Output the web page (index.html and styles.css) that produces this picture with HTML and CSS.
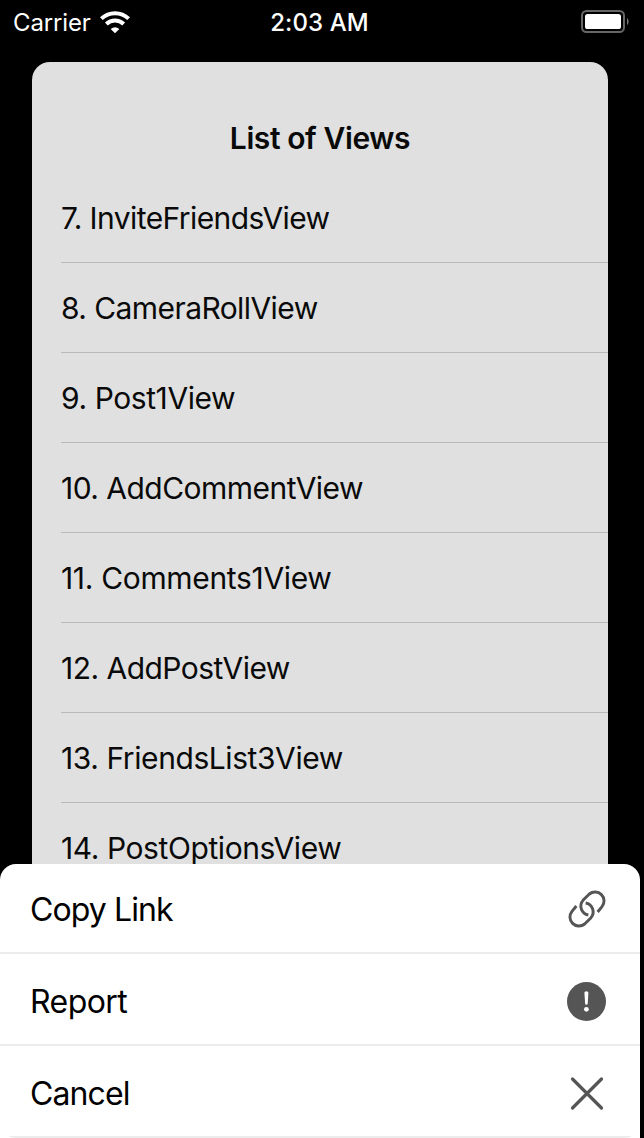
FILE: index.html
```html
<!DOCTYPE html>
<html lang="en">
<head>
<meta charset="utf-8">
<title>List of Views</title>
<link rel="stylesheet" href="styles.css">
</head>
<body>
<div class="phone">
  <header class="status">
    <div class="carrier"><span class="carrier-name">Carrier</span>
      <svg class="wifi" viewBox="0 0 90 68"><g fill="none" stroke="#fff" stroke-width="12"><path d="M4 23C27 1 63 1 86 23"/><path d="M19 39C34 25 56 25 71 39"/></g><path d="M32 54Q45 43 58 54L45 67Z" fill="#fff"/></svg>
    </div>
    <time class="time">2:03 AM</time>
    <svg class="battery" viewBox="0 0 49 24"><rect x="1" y="1" width="42" height="21" rx="4.5" fill="none" stroke="#666" stroke-width="2"/><rect x="4" y="4" width="36" height="15" rx="2.6" fill="#fff"/><path d="M46 8Q47.6 9 47.6 11.5T46 15Z" fill="#777"/></svg>
  </header>
  <main class="card">
    <h1 class="title">List of Views</h1>
    <ul class="views">
      <li class="view"><span class="tight">7. InviteFriendsView</span></li>
      <li class="view"><span class="tight">8. CameraRollView</span></li>
      <li class="view"><span>9. Post1View</span></li>
      <li class="view"><span class="snug">10. AddCommentView</span></li>
      <li class="view"><span class="loose">11. Comments1View</span></li>
      <li class="view"><span class="snug">12. AddPostView</span></li>
      <li class="view"><span>13. FriendsList3View</span></li>
      <li class="view"><span>14. PostOptionsView</span></li>
    </ul>
  </main>
  <section class="sheet">
    <div class="actions">
      <div class="action first"><span>Copy Link</span>
        <svg class="icon" viewBox="69 120 117 117" fill="none" stroke="#555" stroke-width="8.8"><path d="M161 186L174 170A27 27 0 0 0 136 132L117 151A27 27 0 0 0 133 195"/><path d="M97 168L84 184A27 27 0 0 0 122 222L141 203A27 27 0 0 0 125 159"/></svg>
      </div>
      <div class="action"><span class="report">Report</span>
        <svg class="icon" viewBox="0 0 39 39"><circle cx="19.5" cy="19.5" r="19.5" fill="#555"/><path d="M17.4 10.8Q17.4 9.2 19.4 9.2T21.4 10.8L20.7 21.7Q20.6 22.8 19.4 22.8T18.1 21.7Z" fill="#fff"/><circle cx="19.4" cy="27.3" r="2.4" fill="#fff"/></svg>
      </div>
      <div class="action"><span>Cancel</span>
        <svg class="icon" viewBox="0 0 39 39"><path d="M5.5 5L34.5 34M34.5 5L5.5 34" stroke="#555" stroke-width="3.2" stroke-linecap="round"/></svg>
      </div>
    </div>
  </section>
</div>
</body>
</html>
```
FILE: styles.css
```css
* { box-sizing: border-box; }
body { margin: 0; background: #000; font-family: Inter, "Liberation Sans", sans-serif; }
.phone { position: relative; width: 644px; height: 1138px; overflow: hidden; background: #000; }
.status { display: grid; grid-template-columns: 1fr auto 1fr; align-items: center; width: 640px; height: 62px; padding: 0 10px 17px 13px; color: #fff; font-size: 24px; line-height: 30px; }
.carrier { display: flex; align-items: center; gap: 9px; }
.carrier-name { letter-spacing: -0.15px; }
.wifi { width: 30px; height: 22.7px; }
.time { margin-right: 4px; font-weight: 500; letter-spacing: 0.1px; }
.battery { justify-self: end; width: 49px; height: 24px; margin-bottom: 1px; }
.card { width: 576px; height: 900px; margin-left: 32px; padding-top: 56px; border-radius: 18px 18px 0 0; background: #e0e0e0; color: #0a0a0a; }
.title { margin: 0 0 14px; font-size: 30px; line-height: 40px; font-weight: 600; text-align: center; letter-spacing: -0.4px; }
.views { margin: 0; padding: 0 0 0 29px; list-style: none; }
.view { display: flex; align-items: center; height: 90px; border-bottom: 1px solid #b9b9b9; font-size: 30px; white-space: nowrap; letter-spacing: -0.42px; }
.view:first-child { height: 91px; padding-top: 1px; }
.tight { letter-spacing: -0.58px; }
.snug { letter-spacing: -0.53px; }
.loose { letter-spacing: -0.33px; }
.sheet { position: absolute; left: 0; bottom: 0; width: 640px; height: 274px; border-radius: 16px 16px 0 0; background: #fff; overflow: hidden; }
.actions { border-radius: 0 0 16px 16px; overflow: hidden; }
.action { display: flex; align-items: center; justify-content: space-between; height: 92px; padding: 5px 34px 0 30px; border-bottom: 2px solid #ececec; color: #000; font-size: 32px; letter-spacing: -0.9px; }
.action.first { height: 90px; padding-top: 3px; }
.report { letter-spacing: -0.55px; }
.icon { width: 39px; height: 39px; }
```
